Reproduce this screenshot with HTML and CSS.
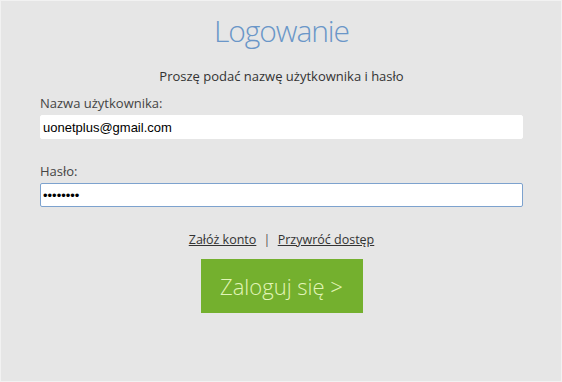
FILE: index.html
```html
<!DOCTYPE html>
<html lang="pl">
<head>
    <meta charset="UTF-8">
    <title>Logowanie</title>
    <link rel="stylesheet" href="styles.css">
</head>
<body>
    <div class="page">
        <h1 class="title">Logowanie</h1>
        <p class="subtitle">Proszę podać nazwę użytkownika i hasło</p>

        <form class="login-form">
            <div class="field">
                <label for="login">Nazwa użytkownika:</label>
                <input type="text" id="login" value="uonetplus@gmail.com">
            </div>
            <div class="field">
                <label for="password">Hasło:</label>
                <input type="password" id="password" class="focused" value="12345678">
            </div>

            <div class="links">
                <a href="#">Załóż konto</a>
                <span class="sep">|</span>
                <a href="#">Przywróć dostęp</a>
            </div>

            <div class="actions">
                <button type="button" class="login-button">Zaloguj się &gt;</button>
            </div>
        </form>
    </div>
</body>
</html>
```

FILE: styles.css
```css
html, body {
    margin: 0;
    padding: 0;
}

body {
    font-family: "Open Sans", "DejaVu Sans", sans-serif;
    color: #333;
    background-color: #e6e6e6;
}

.page {
    height: 380px;
    border: 1px solid #f2f2f2;
    background-color: #e6e6e6;
    padding: 0 38px 0 39px;
}

.title {
    margin: 0;
    padding-top: 9px;
    font-size: 30px;
    font-weight: 300;
    letter-spacing: -1.1px;
    line-height: 42px;
    color: #6a96c8;
    text-align: center;
}

.subtitle {
    margin: 15px 0 0;
    font-size: 13px;
    line-height: 18px;
    text-align: center;
}

.field {
    margin-top: 9px;
}

.field + .field {
    margin-top: 23px;
}

.field label {
    display: block;
    font-size: 13px;
    line-height: 18px;
    color: #444;
    margin-bottom: 3px;
}

.field input {
    display: block;
    box-sizing: border-box;
    width: 100%;
    height: 24px;
    padding: 0 2px;
    border: 1px solid #fff;
    border-radius: 2px;
    background: #fff;
    font-family: "Liberation Sans", Arial, sans-serif;
    font-size: 13px;
    color: #000;
    outline: none;
}

.field input.focused {
    border-color: #7da2ce;
}

.links {
    margin-top: 24px;
    text-align: center;
    font-size: 12.5px;
    line-height: 18px;
}

.links a {
    color: #333;
}

.sep {
    margin: 0 4px;
    color: #555;
}

.actions {
    margin-top: 10px;
    text-align: center;
}

.login-button {
    width: 162px;
    height: 54px;
    border: none;
    background-color: #74b02e;
    color: #e2f5b8;
    font-family: "Open Sans", sans-serif;
    font-size: 22px;
    font-weight: 300;
    cursor: pointer;
}
```
